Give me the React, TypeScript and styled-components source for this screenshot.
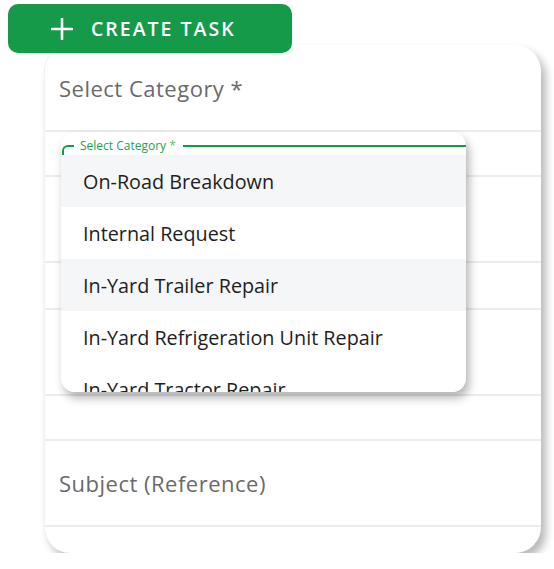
import React from "react";
import styled, { createGlobalStyle } from "styled-components";

const GlobalStyle = createGlobalStyle`
  body {
    margin: 0;
    background: #ffffff;
    font-family: "Open Sans", "Noto Sans", sans-serif;
  }
`;

const green = "#159a4a";

const categories = [
  "On-Road Breakdown",
  "Internal Request",
  "In-Yard Trailer Repair",
  "In-Yard Refrigeration Unit Repair",
  "In-Yard Tractor Repair",
];

function PlusIcon() {
  return (
    <svg width="22" height="22" viewBox="0 0 22 22" fill="none">
      <path d="M11 1v20M1 11h20" stroke="#fff" strokeWidth="2.6" strokeLinecap="round" />
    </svg>
  );
}

function App() {
  return (
    <PageWrapper>
      <GlobalStyle />
      <CreateButton>
        <PlusIcon />
        <span>CREATE TASK</span>
      </CreateButton>
      <FormCard>
        <FieldRow $height={87}>
          <FieldLabel>Select Category *</FieldLabel>
        </FieldRow>
        <FieldRow $height={45} />
        <FieldRow $height={86} />
        <FieldRow $height={47} />
        <FieldRow $height={86} />
        <FieldRow $height={45} />
        <FieldRow $height={86}>
          <FieldLabel>Subject (Reference)</FieldLabel>
        </FieldRow>

        <DropdownPanel>
          <OutlineTop>
            <OutlineCorner />
            <OutlineLabel>
              Select Category <Star>*</Star>
            </OutlineLabel>
            <OutlineLine />
          </OutlineTop>
          <MenuList>
            {categories.map((c, i) => (
              <MenuItem key={c} $shaded={i === 0 || i === 2}>
                {c}
              </MenuItem>
            ))}
          </MenuList>
        </DropdownPanel>
      </FormCard>
    </PageWrapper>
  );
}

const PageWrapper = styled.div`
  padding: 4px 0 0 8px;
  display: flex;
  flex-direction: column;
  align-items: flex-start;
`;

const CreateButton = styled.button`
  position: relative;
  z-index: 2;
  width: 284px;
  height: 49px;
  border: none;
  border-radius: 10px;
  background: ${green};
  color: #fff;
  display: flex;
  align-items: center;
  gap: 18px;
  padding: 0 0 0 43px;
  font-family: "Open Sans", sans-serif;
  font-weight: 600;
  font-size: 19.5px;
  letter-spacing: 2px;
  cursor: pointer;
`;

const FormCard = styled.div`
  position: relative;
  margin: -8px 0 0 36px;
  width: 497px;
  height: 508px;
  background: #fff;
  border-left: 1px solid #f0f0f0;
  border-radius: 26px;
  box-shadow: 5px 6px 8px rgba(0, 0, 0, 0.28);
  overflow: hidden;
  box-sizing: border-box;
`;

const FieldRow = styled.div<{ $height: number }>`
  height: ${(p) => p.$height}px;
  border-bottom: 2px solid #ececec;
  box-sizing: border-box;
  display: flex;
  align-items: center;
  padding-left: 14px;
`;

const FieldLabel = styled.div`
  font-family: "Open Sans", sans-serif;
  font-size: 22px;
  letter-spacing: 0.5px;
  color: #6a6a6a;
`;

const DropdownPanel = styled.div`
  position: absolute;
  left: 16px;
  top: 87px;
  width: 405px;
  height: 260px;
  background: #fff;
  border-radius: 14px;
  box-shadow: 3px 6px 10px rgba(0, 0, 0, 0.3);
  overflow: hidden;
`;

const OutlineTop = styled.div`
  display: flex;
  align-items: flex-start;
  height: 14px;
  margin: 13px 0 0 1px;
`;

const OutlineCorner = styled.div`
  width: 12px;
  height: 14px;
  border-top: 2px solid ${green};
  border-left: 2px solid ${green};
  border-top-left-radius: 6px;
  box-sizing: border-box;
`;

const OutlineLabel = styled.div`
  margin-top: -7px;
  padding: 0 7px 0 6px;
  font-family: "Open Sans", sans-serif;
  font-size: 12px;
  line-height: 15px;
  color: #22a24f;
`;

const Star = styled.span`
  color: #5cbf6a;
`;

const OutlineLine = styled.div`
  flex: 1;
  border-top: 2px solid ${green};
`;

const MenuList = styled.div`
  margin-top: -4px;
  position: relative;
`;

const MenuItem = styled.div<{ $shaded: boolean }>`
  height: 52px;
  display: flex;
  align-items: center;
  padding-left: 22px;
  background: ${(p) => (p.$shaded ? "#f5f6f8" : "#fff")};
  font-size: 19.8px;
  color: #1e1e1e;
`;

export default App;
